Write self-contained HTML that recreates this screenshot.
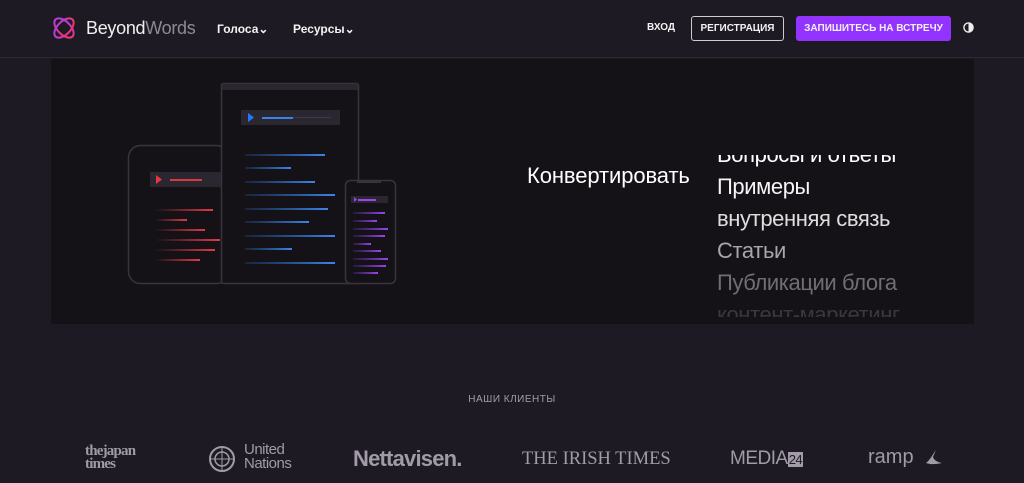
<!DOCTYPE html>
<html><head><meta charset="utf-8"><style>
*{margin:0;padding:0;box-sizing:border-box}
body{width:1024px;height:483px;overflow:hidden;background:#1e1a24;font-family:"Liberation Sans",sans-serif;color:#fff;position:relative}
.hdr{position:absolute;left:0;top:0;width:1024px;height:58px;border-bottom:1px solid #2c2833}
.a{position:absolute}
.nav{font-weight:bold;font-size:12px;color:#f2f2f2}
.card{position:absolute;left:51px;top:59px;width:923px;height:265px;background:#151217}
.rot{position:absolute;left:717px;top:155px;width:260px;height:162px;overflow:hidden;font-size:22px;line-height:32px}
.rot div{letter-spacing:-0.4px}
.logos{position:absolute;top:440px;color:#a09ba6}
</style></head><body>
<div class="hdr">
 <svg class="a" style="left:50px;top:14px" width="28" height="28" viewBox="0 0 28 28"><defs><linearGradient id="g" x1="0" y1="0" x2="1" y2="1"><stop offset="0" stop-color="#a340ff"/><stop offset="1" stop-color="#ff3355"/></linearGradient></defs><ellipse cx="14" cy="14" rx="12" ry="6.5" transform="rotate(45 14 14)" fill="none" stroke="url(#g)" stroke-width="2"/><ellipse cx="14" cy="14" rx="12" ry="6.5" transform="rotate(-45 14 14)" fill="none" stroke="url(#g)" stroke-width="2"/></svg>
 <div class="a" style="left:86px;top:18px;font-size:18px;color:#f0f0f0;letter-spacing:-0.3px">Beyond<span style="color:#8d8a92">Words</span></div>
 <div class="a nav" style="left:217px;top:22px">Голоса⌄</div>
 <div class="a nav" style="left:293px;top:22px">Ресурсы⌄</div>
 <div class="a nav" style="left:647px;top:22px;font-size:10px">ВХОД</div>
 <div class="a nav" style="left:691px;top:16px;width:93px;height:25px;border:1px solid #ccc;border-radius:3px;font-size:10px;text-align:center;line-height:23px">РЕГИСТРАЦИЯ</div>
 <div class="a nav" style="left:796px;top:16px;width:155px;height:25px;background:#9333ff;border-radius:3px;font-size:10px;text-align:center;line-height:25px">ЗАПИШИТЕСЬ НА ВСТРЕЧУ</div>
 <svg class="a" style="left:963px;top:22px" width="11" height="11" viewBox="0 0 12 12"><circle cx="6" cy="6" r="5" fill="none" stroke="#eee" stroke-width="1.5"/><path d="M6 1a5 5 0 0 1 0 10z" fill="#eee"/></svg>
</div>
<div class="card">
 <svg class="a" style="left:0;top:0" width="400" height="265" viewBox="51 59 400 265">
  <defs>
   <linearGradient id="r" x1="0" x2="1"><stop offset="0" stop-color="#e03a44" stop-opacity="0"/><stop offset="1" stop-color="#e03a44"/></linearGradient>
   <linearGradient id="b" x1="0" x2="1"><stop offset="0" stop-color="#2a6fd0" stop-opacity="0.2"/><stop offset="1" stop-color="#3a84e8"/></linearGradient>
   <linearGradient id="p" x1="0" x2="1"><stop offset="0" stop-color="#7a35d0" stop-opacity="0.2"/><stop offset="1" stop-color="#9a45f0"/></linearGradient>
  </defs>
  <rect x="128.5" y="145.5" width="100" height="138" rx="12" fill="#151217" stroke="#38343d" stroke-width="1.5"/>
  <rect x="150" y="172" width="72" height="15" fill="#2b2731"/>
  <path d="M156 175l6 4.5-6 4.5z" fill="#e8353f"/><rect x="170" y="179" width="32" height="2" fill="#d63a44"/>
  <g fill="url(#r)"><rect x="155" y="209" width="58" height="2"/><rect x="155" y="219" width="32" height="2"/><rect x="155" y="229" width="50" height="2"/><rect x="155" y="239" width="65" height="2"/><rect x="155" y="249" width="60" height="2"/><rect x="155" y="259" width="45" height="2"/></g>
  <rect x="221.5" y="83.5" width="137" height="200" rx="2" fill="#151217" stroke="#38343d" stroke-width="1.5"/>
  <rect x="222" y="84" width="136" height="6" fill="#2b2731"/>
  <rect x="241" y="110" width="99" height="15" fill="#2b2731"/>
  <path d="M248 113l6 4.5-6 4.5z" fill="#1e7bff"/><rect x="262" y="117" width="31" height="2" fill="#3a84e8"/><rect x="293" y="117" width="38" height="1" fill="#403a48"/>
  <g fill="url(#b)"><rect x="245" y="154" width="80" height="2"/><rect x="245" y="167" width="46" height="2"/><rect x="245" y="181" width="70" height="2"/><rect x="245" y="194" width="90" height="2"/><rect x="245" y="208" width="83" height="2"/><rect x="245" y="221" width="64" height="2"/><rect x="245" y="235" width="90" height="2"/><rect x="245" y="248" width="47" height="2"/><rect x="245" y="262" width="90" height="2"/></g>
  <rect x="345.5" y="180.5" width="50" height="103" rx="5" fill="#151217" stroke="#38343d" stroke-width="1.5"/>
  <rect x="357" y="180" width="24" height="3" fill="#38343d"/>
  <rect x="351" y="196" width="37" height="7" fill="#2b2731"/><rect x="358" y="199" width="18" height="2" fill="#9a45f0"/><path d="M354 197l3 2.5-3 2.5z" fill="#9a45f0"/>
  <g fill="url(#p)"><rect x="353" y="212" width="32" height="2"/><rect x="353" y="220" width="24" height="2"/><rect x="353" y="228" width="35" height="2"/><rect x="353" y="235" width="32" height="2"/><rect x="353" y="243" width="18" height="2"/><rect x="353" y="250" width="28" height="2"/><rect x="353" y="258" width="35" height="2"/><rect x="353" y="265" width="33" height="2"/><rect x="353" y="272" width="25" height="2"/></g>
 </svg>
</div>
<div class="a" style="left:527px;top:163px;font-size:22px;letter-spacing:-0.1px">Конвертировать</div>
<div class="rot">
 <div style="margin-top:-16px;color:#fff">Вопросы и ответы</div>
 <div style="color:#f5f5f5">Примеры</div>
 <div style="color:#dedede">внутренняя связь</div>
 <div style="color:#a8a6ab">Статьи</div>
 <div style="color:#706d74">Публикации блога</div>
 <div style="color:#3a373e">контент-маркетинг</div>
</div>
<div class="a" style="left:0;width:1024px;top:394px;text-align:center;font-size:10px;color:#a19da7;letter-spacing:0.5px">НАШИ КЛИЕНТЫ</div>
<div class="logos" style="left:85px;top:445px;font-family:'Liberation Serif',serif;font-weight:bold;font-size:15px;line-height:13px;letter-spacing:-0.8px">the<span>japan</span><br>times</div>
<svg class="a" style="left:207px;top:444px" width="30" height="30" viewBox="0 0 30 30"><circle cx="15" cy="15" r="12" fill="none" stroke="#a09ba6" stroke-width="2"/><circle cx="15" cy="15" r="7" fill="none" stroke="#a09ba6" stroke-width="1.5"/><path d="M15 3v24M3 15h24" stroke="#a09ba6"/></svg>
<div class="logos" style="left:244px;top:443px;font-size:15px;line-height:14px;letter-spacing:-0.5px">United<br>Nations</div>
<div class="logos" style="left:353px;top:446px;font-size:22px;font-weight:bold;letter-spacing:-0.8px">Nettavisen.</div>
<div class="logos" style="left:522px;top:449px;font-family:'Liberation Serif',serif;font-size:18.5px">THE IRISH TIMES</div>
<div class="logos" style="left:730px;top:448px;font-size:19px;letter-spacing:-0.5px">MEDIA<span style="background:#a09ba6;color:#1e1a24;font-size:13px;padding:0 1px">24</span></div>
<div class="logos" style="left:868px;top:446px;font-size:20px">ramp</div>
<svg class="a" style="left:924px;top:449px" width="20" height="18" viewBox="0 0 20 18"><path d="M2 14c5 2 12 1 16 0-5-1-8-3-9-6l3-7C9 5 6 11 2 14z" fill="#a09ba6"/></svg>
</body></html>
